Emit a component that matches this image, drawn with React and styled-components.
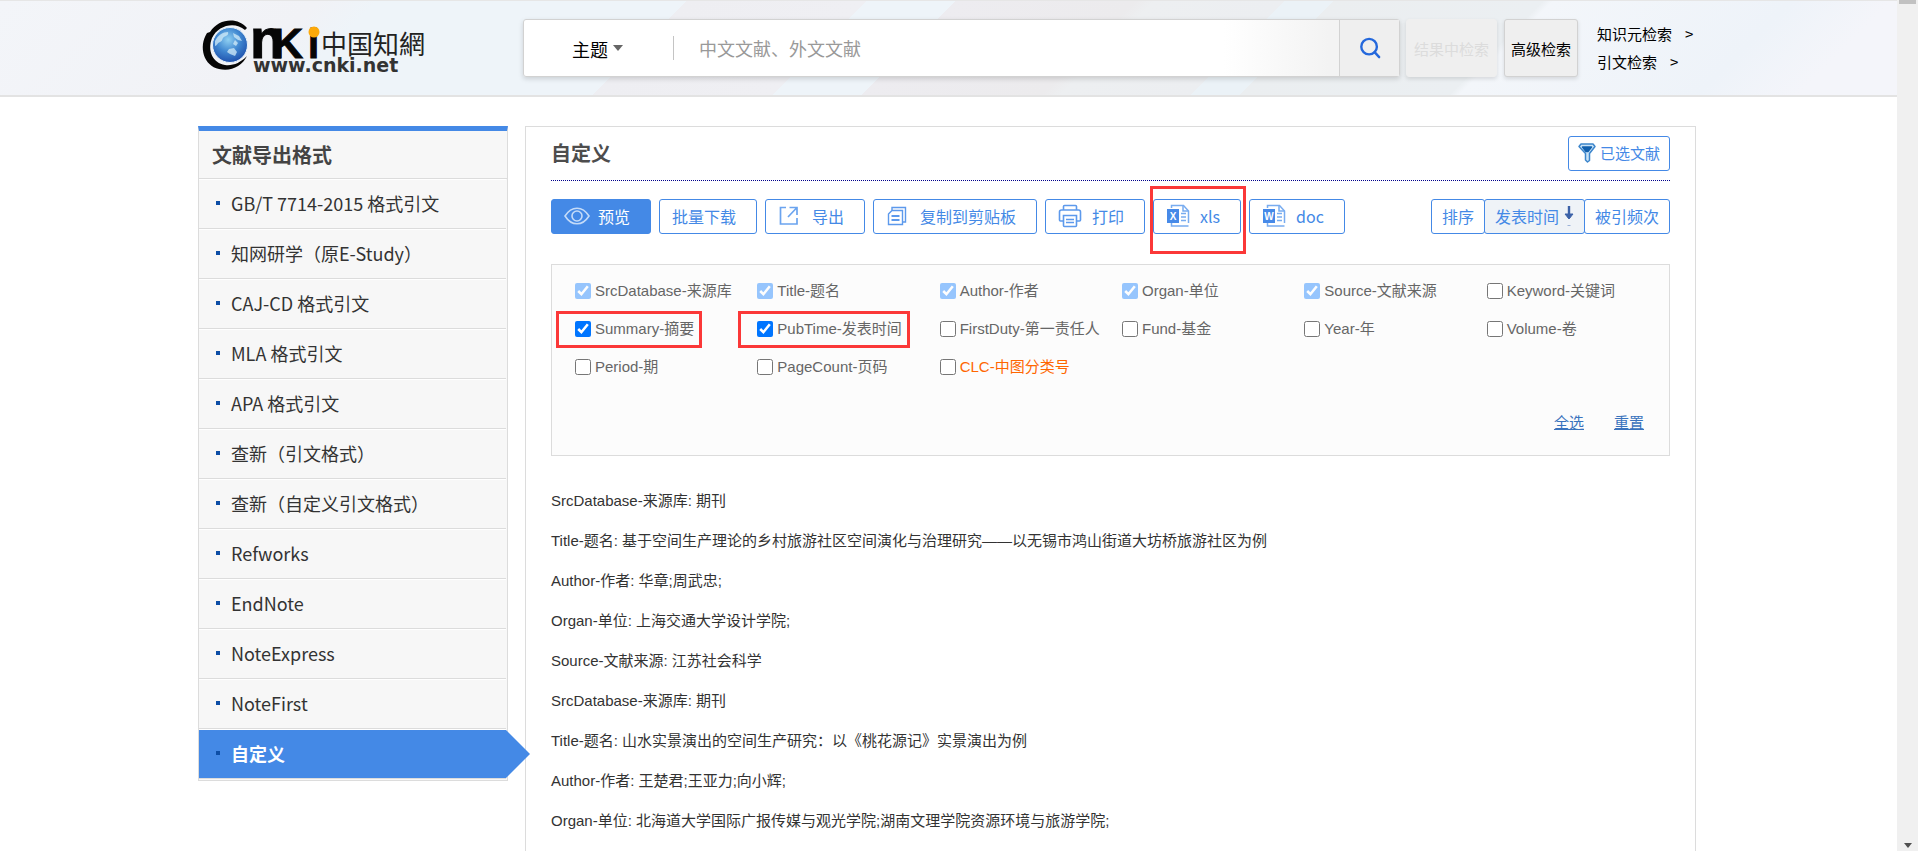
import React from "react";
import styled, { createGlobalStyle } from "styled-components";

const formats = [
  "GB/T 7714-2015 格式引文",
  "知网研学（原E-Study）",
  "CAJ-CD 格式引文",
  "MLA 格式引文",
  "APA 格式引文",
  "查新（引文格式）",
  "查新（自定义引文格式）",
  "Refworks",
  "EndNote",
  "NoteExpress",
  "NoteFirst",
  "自定义",
];

const fields = [
  { name: "SrcDatabase-来源库", checked: true, fixed: true },
  { name: "Title-题名", checked: true, fixed: true },
  { name: "Author-作者", checked: true, fixed: true },
  { name: "Organ-单位", checked: true, fixed: true },
  { name: "Source-文献来源", checked: true, fixed: true },
  { name: "Keyword-关键词" },
  { name: "Summary-摘要", checked: true, marked: true },
  { name: "PubTime-发表时间", checked: true, marked: true },
  { name: "FirstDuty-第一责任人" },
  { name: "Fund-基金" },
  { name: "Year-年" },
  { name: "Volume-卷" },
  { name: "Period-期" },
  { name: "PageCount-页码" },
  { name: "CLC-中图分类号", highlight: true },
];

const records = [
  "SrcDatabase-来源库: 期刊",
  "Title-题名: 基于空间生产理论的乡村旅游社区空间演化与治理研究——以无锡市鸿山街道大坊桥旅游社区为例",
  "Author-作者: 华章;周武忠;",
  "Organ-单位: 上海交通大学设计学院;",
  "Source-文献来源: 江苏社会科学",
  "SrcDatabase-来源库: 期刊",
  "Title-题名: 山水实景演出的空间生产研究：以《桃花源记》实景演出为例",
  "Author-作者: 王楚君;王亚力;向小辉;",
  "Organ-单位: 北海道大学国际广报传媒与观光学院;湖南文理学院资源环境与旅游学院;",
];

const Logo = () => (
  <svg width="226" height="56" viewBox="0 0 226 56" overflow="visible" role="img" aria-label="CNKI">
    <defs>
      <radialGradient id="globe" cx="0.45" cy="0.35" r="0.7">
        <stop offset="0" stopColor="#8fd0f2" />
        <stop offset="0.5" stopColor="#3f86d0" />
        <stop offset="1" stopColor="#1b4aa8" />
      </radialGradient>
    </defs>
    <circle cx="28" cy="25" r="17.5" fill="url(#globe)" stroke="#e8f3fb" />
    <path
      d="M13 21c3-6 8-9 13-9 1 3-2 4-4 5s-1 4-4 5-3 4-5 4zM31 13l6 3 3 5-4-1-4-3zM27 29l5-1 3 4-2 4-5-2-3-2zM33 20l3 3-2 3-3-2z"
      fill="#d3ecf8"
      opacity="0.75"
    />
    <path
      d="M45 8C36-3 17-2 8 12l-3 1C-4 27 2 46 17 49c12 3 23-3 28-13-7 7-14 10-22 9C11 43 5 31 10 18 16 5 33 1 43 10z"
      fill="#060606"
    />
    <text
      x="48"
      y="38"
      fontSize="56"
      fontFamily="'Liberation Sans', Arial, sans-serif"
      fontWeight="700"
      fill="#060606"
      stroke="#060606"
    >
      n
      <tspan x="70" fontSize="43">K</tspan>
      <tspan x="106" fontSize="40">i</tspan>
    </text>
    <circle cx="112" cy="12" r="5.5" fill="#fda90a" />
    <text x="119" y="34" fontSize="26" fontFamily="'Noto Sans CJK SC', sans-serif" fill="#222">
      中国知網
    </text>
    <text x="51" y="52" fontSize="19" fontFamily="'DejaVu Sans', sans-serif" fontWeight="700" fill="#333">
      www.cnki.net
    </text>
  </svg>
);

const SearchIcon = () => (
  <svg width="22" height="22" viewBox="0 0 24 24" fill="none" stroke="#2468dc" strokeWidth="2.6">
    <circle cx="11" cy="10.500" r="8.500" />
    <path d="M17 16.500l5 5.500" strokeLinecap="round" />
  </svg>
);

const FunnelIcon = () => (
  <svg width="18" height="20" viewBox="0 0 18 20" fill="none" stroke="#3d86cc" strokeWidth="1.500" strokeLinejoin="round">
    <path d="M3 1h12l2 2.500-5.500 7v7L9.500 19 7.500 17v-6.500L1 3.500z" fill="#c9e3f7" />
    <path d="M4.500 4h9L10 8.500H8z" fill="#1160ae" stroke="#1160ae" />
  </svg>
);

const EyeIcon = () => (
  <svg width="26" height="18" viewBox="0 0 26 18" fill="none" stroke="#c4dbf8" strokeWidth="1.600">
    <path d="M1 9C4.500 3.500 8.500 1.200 13 1.200S21.500 3.500 25 9c-3.500 5.500-7.500 7.800-12 7.800S4.500 14.500 1 9z" />
    <circle cx="13" cy="9" r="5" />
  </svg>
);

const ExportIcon = () => (
  <svg width="20" height="20" viewBox="0 0 20 20" fill="none" stroke="#6ba4ef" strokeWidth="1.700">
    <path d="M7 1.500H1.500v16.500h16.500v-6" />
    <path d="M10.500 1.500H18V9M18 1.500L9 11" />
  </svg>
);

const CopyIcon = () => (
  <svg width="20" height="20" viewBox="0 0 20 20" fill="none" stroke="#5c99ec" strokeWidth="1.400">
    <path d="M5 4V1.500h13.500V16H16" />
    <path d="M1.500 8L5 4.500h10.500V18.500h-14z" />
    <path d="M4.500 10h8M4.500 14h8" strokeWidth="1.800" />
  </svg>
);

const PrintIcon = () => (
  <svg width="24" height="24" viewBox="0 0 24 24" fill="none" stroke="#5c99ec" strokeWidth="1.600">
    <path d="M5.500 6V2.500q0-1 1-1h11q1 0 1 1V6" />
    <path d="M5 17H2.500q-1 0-1-1V8q0-2 2-2h17q2 0 2 2v8q0 1-1 1H19" />
    <path d="M5.500 11.500h13v10q0 1-1 1h-11q-1 0-1-1zM8 15.500h8M8 18.500h8" />
  </svg>
);

const FileIcon = ({ letter }) => (
  <svg width="24" height="24" viewBox="0 0 24 24" fill="none" stroke="#78acf0" strokeWidth="1.500">
    <path d="M5.500 4V1.500h12L22.500 7v12M5.500 19v3h17" />
    <path d="M17 1.500V7h5.500M15 9.500h5M15 13h5M15 16.500h5" />
    <rect x="1" y="5" width="12" height="14" fill="#478ae8" stroke="none" />
    <text
      x="7"
      y="16"
      fontSize="10"
      fontWeight="700"
      fontFamily="'Liberation Sans', sans-serif"
      textAnchor="middle"
      fill="#fff"
      stroke="none"
    >
      {letter}
    </text>
  </svg>
);

const SortArrow = () => (
  <svg width="10" height="22" viewBox="0 0 10 22" fill="none" stroke="#3c62a8" strokeWidth="2.400">
    <path d="M5 1v12" />
    <path d="M1 9L5 14l4-5z" fill="#3c62a8" strokeWidth="1" />
    <path d="M3.500 20.500h3" stroke="#9db3d8" strokeWidth="1" />
  </svg>
);

export default function App() {
  return (
    <Window>
      <GlobalStyle />
      <Page>
        <Header>
          <HeaderInner>
            <LogoLink href="#home">
              <Logo />
            </LogoLink>
            <SearchBox>
              <TopicPicker>
                <TopicSelect aria-label="检索项" defaultValue="主题">
                  <option>主题</option>
                </TopicSelect>
                <Caret />
              </TopicPicker>
              <SearchInput aria-label="检索词" placeholder="中文文献、外文文献" />
              <SearchButton aria-label="检索">
                <SearchIcon />
              </SearchButton>
            </SearchBox>
            <HeaderButton $muted>结果中检索</HeaderButton>
            <HeaderButton>高级检索</HeaderButton>
            <HeaderLinks>
              <HeaderLink href="#knowledge">
                知识元检索<span>&gt;</span>
              </HeaderLink>
              <HeaderLink href="#citation">
                引文检索<span>&gt;</span>
              </HeaderLink>
            </HeaderLinks>
          </HeaderInner>
        </Header>

        <Content>
          <Sidebar>
            <SidebarTitle>文献导出格式</SidebarTitle>
            <FormatList>
              {formats.map((name) => (
                <FormatItem key={name}>
                  <FormatLink href="#format" $active={name === "自定义"}>
                    {name}
                  </FormatLink>
                </FormatItem>
              ))}
            </FormatList>
          </Sidebar>

          <Panel>
            <PanelHead>
              <PanelTitle>自定义</PanelTitle>
              <SelectedButton>
                <FunnelIcon />
                已选文献
              </SelectedButton>
            </PanelHead>

            <Toolbar>
              <ToolButton $primary>
                <EyeIcon />
                预览
              </ToolButton>
              <ToolButton>批量下载</ToolButton>
              <ToolButton $wide>
                <ExportIcon />
                导出
              </ToolButton>
              <ToolButton $wide>
                <CopyIcon />
                复制到剪贴板
              </ToolButton>
              <ToolButton>
                <PrintIcon />
                打印
              </ToolButton>
              <MarkedTool>
                <ToolButton>
                  <FileIcon letter="X" />
                  xls
                </ToolButton>
              </MarkedTool>
              <ToolButton>
                <FileIcon letter="W" />
                doc
              </ToolButton>
              <SortGroup>
                <SortButton>排序</SortButton>
                <SortButton $active>
                  发表时间
                  <SortArrow />
                </SortButton>
                <SortButton>被引频次</SortButton>
              </SortGroup>
            </Toolbar>

            <FieldBox>
              <FieldGrid>
                {fields.map((field) => (
                  <FieldLabel key={field.name} $marked={field.marked} $highlight={field.highlight}>
                    <Checkbox defaultChecked={field.checked} $fixed={field.fixed} />
                    {field.name}
                  </FieldLabel>
                ))}
              </FieldGrid>
              <FieldActions>
                <ActionLink href="#all">全选</ActionLink>
                <ActionLink href="#reset">重置</ActionLink>
              </FieldActions>
            </FieldBox>

            <Records>
              {records.map((line, i) => (
                <RecordLine key={i}>{line}</RecordLine>
              ))}
            </Records>
          </Panel>
        </Content>
      </Page>
      <ScrollTrack>
        <ScrollThumb />
        <ScrollArrow />
      </ScrollTrack>
    </Window>
  );
}

const GlobalStyle = createGlobalStyle`
  * {
    box-sizing: border-box;
  }
  body {
    margin: 0;
    background: #fff;
    font-family: "Liberation Sans", Arial, "Noto Sans CJK SC", sans-serif;
    font-size: 15px;
    color: #333;
  }
  button, input, select {
    font-family: "Noto Sans CJK SC", sans-serif;
    margin: 0;
  }
  a {
    color: inherit;
    text-decoration: none;
  }
`;

const Window = styled.div`
  display: flex;
  height: 100vh;
  overflow: hidden;
`;

const Page = styled.div`
  flex: 1;
  min-width: 0;
`;

const ScrollTrack = styled.div`
  display: flex;
  flex-direction: column;
  justify-content: space-between;
  width: 21px;
  padding: 0 2px 3px;
  background: #f0f0f0;
`;

const ScrollThumb = styled.div`
  height: 4px;
  background: #c1c1c1;
`;

const ScrollArrow = styled.div`
  align-self: center;
  border: 4px solid transparent;
  border-top: 5px solid #505050;
  border-bottom: 0;
`;

const Header = styled.header`
  border-top: 1px solid #e6e6e6;
  border-bottom: 2px solid #e3e3e3;
  background: linear-gradient(
    135deg,
    #f3f5f9 0%,
    #f1f2f6 16%,
    #eef4f9 19%,
    #eef4f9 34.5%,
    #eeeef2 34.5%,
    #efeff3 43.5%,
    #eef4f9 43.5%,
    #eef4f9 48%,
    #edecf0 48%,
    #ecebed 57%,
    #edeff1 58%,
    #eceef1 64.5%,
    #ebf2f7 64.5%,
    #ebf2f7 67%,
    #ebeef0 67%,
    #ebeff2 77.5%,
    #f3f6fa 78%,
    #eef3f9 90%,
    #f4f5fa 95%
  );
`;

const HeaderInner = styled.div`
  display: flex;
  align-items: center;
  max-width: 1501px;
  margin: 0 auto;
  padding: 18px 0;
`;

const LogoLink = styled.a`
  display: flex;
  margin-right: 95px;
  padding-left: 4px;
`;

const SearchBox = styled.div`
  display: flex;
  flex: 0 1 877px;
  height: 58px;
  border: 1px solid #d2d2d2;
  border-radius: 3px;
  background: linear-gradient(90deg, #fff 80%, #f3f3f3 92%);
  box-shadow: 0 2px 5px rgba(0, 0, 0, 0.15);
`;

const TopicPicker = styled.div`
  display: flex;
  align-items: center;
  width: 150px;
  margin: 16px 0;
  padding-left: 48px;
  border-right: 1px solid #c4c4c4;
`;

const TopicSelect = styled.select`
  appearance: none;
  padding: 2px 0 0;
  border: 0;
  background: none;
  font-size: 18px;
  color: #000;
`;

const Caret = styled.span`
  margin-left: 5px;
  border: 5px solid transparent;
  border-top: 6px solid #666;
  border-bottom: 0;
`;

const SearchInput = styled.input`
  flex: 1;
  min-width: 0;
  padding: 0 25px;
  border: 0;
  background: none;
  font-size: 18px;

  &::placeholder {
    color: #999;
  }
`;

const SearchButton = styled.button`
  display: flex;
  align-items: center;
  justify-content: center;
  width: 60px;
  border: 0;
  border-left: 1px solid #d2d2d2;
  background: #efefef;
`;

const HeaderButton = styled.button`
  flex: none;
  height: 58px;
  margin-left: ${(p) => (p.$muted ? 6 : 7)}px;
  padding: 0 ${(p) => (p.$muted ? 7 : 6)}px;
  border: 1px solid ${(p) => (p.$muted ? "#efefef" : "#d2d2d2")};
  border-radius: 3px;
  background: #efefef;
  box-shadow: 0 2px 4px rgba(0, 0, 0, 0.12);
  font-size: 15px;
  color: ${(p) => (p.$muted ? "#dcdcdc" : "#000")};
`;

const HeaderLinks = styled.nav`
  display: flex;
  flex-direction: column;
  margin-left: 19px;
  font-family: "Noto Sans CJK SC", sans-serif;
  line-height: 28px;
  color: #000;
`;

const HeaderLink = styled.a`
  display: flex;
  gap: 13px;
  white-space: nowrap;
`;

const Content = styled.main`
  display: flex;
  align-items: flex-start;
  gap: 17px;
  max-width: 1501px;
  margin: 29px auto 0;
  padding-right: 3px;
`;

const Sidebar = styled.aside`
  flex: none;
  width: 310px;
  padding-bottom: 1px;
  border: 1px solid #dcdcdc;
  border-top: 5px solid #4489e6;
  background: #f7f7f7;
  font-family: "Noto Sans CJK SC", sans-serif;
`;

const SidebarTitle = styled.h2`
  margin: 0;
  padding: 0 13px;
  border-bottom: 1px solid #dcdcdc;
  font-size: 20px;
  line-height: 47px;
  color: #444;
`;

const FormatList = styled.ul`
  margin: 0;
  padding: 0 1px 0 0;
  list-style: none;
`;

const FormatItem = styled.li`
  border-top: 1px solid #fff;
  border-bottom: 1px solid #dcdcdc;
`;

const FormatLink = styled.a`
  position: relative;
  display: flex;
  align-items: center;
  gap: 11px;
  padding: 0 0 2px 17px;
  font-size: 18px;
  line-height: 46px;
  font-weight: ${(p) => (p.$active ? 700 : 400)};
  color: ${(p) => (p.$active ? "#fff" : "#333")};
  background: ${(p) => (p.$active ? "#4489e6" : "none")};

  &::before {
    content: "";
    width: 4px;
    height: 4px;
    background: #0d4ea6;
  }

  &::after {
    content: "";
    display: ${(p) => (p.$active ? "block" : "none")};
    position: absolute;
    left: 100%;
    top: 0;
    border: 24px solid transparent;
    border-left-color: #4489e6;
    border-right: 0;
  }
`;

const Panel = styled.section`
  flex: 1;
  min-width: 0;
  padding: 9px 25px 60px;
  border: 1px solid #dcdcdc;
`;

const PanelHead = styled.div`
  display: flex;
  justify-content: space-between;
  align-items: flex-start;
  padding-bottom: 9px;
  border-bottom: 1px dotted #00008b;
`;

const PanelTitle = styled.h1`
  margin: 0;
  font-family: "Noto Sans CJK SC", sans-serif;
  font-size: 20px;
  line-height: 34px;
  color: #4d4d4d;
`;

const BlueButton = styled.button`
  display: flex;
  align-items: center;
  justify-content: center;
  height: 35px;
  border: 1px solid #4489e6;
  border-radius: 3px;
  background: #fff;
  color: #4489e6;
  white-space: nowrap;
`;

const SelectedButton = styled(BlueButton)`
  gap: 4px;
  padding: 0 9px 2px;
  font-size: 15px;
`;

const Toolbar = styled.div`
  display: flex;
  gap: 8px;
  margin-top: 18px;
`;

const ToolButton = styled(BlueButton)`
  gap: ${(p) => (p.$primary ? 8 : p.$wide ? 13 : 10)}px;
  padding: 0 20px 2px ${(p) => (p.$wide ? 13 : 12)}px;
  font-size: 16px;
  ${(p) => p.$primary && "background: #4489e6; color: #fff;"}
`;

const RedFrame = `
  position: relative;

  &::after {
    content: "";
    position: absolute;
    border: 3px solid #fb3838;
    pointer-events: none;
  }
`;

const MarkedTool = styled.div`
  ${RedFrame}

  &::after {
    inset: -13px -5px -20px -3px;
  }
`;

const SortGroup = styled.div`
  display: flex;
  margin-left: auto;
`;

const SortButton = styled(BlueButton)`
  gap: 5px;
  padding: 0 10px 2px;
  font-size: 16px;
  background: ${(p) => (p.$active ? "#eff3f7" : "#fff")};

  & + & {
    margin-left: -1px;
  }
`;

const FieldBox = styled.form`
  margin-top: 30px;
  padding: 7px 0 19px 23px;
  border: 1px solid #dcdcdc;
  background: #fcfcfc;
`;

const FieldGrid = styled.div`
  display: grid;
  grid-template-columns: repeat(6, 1fr);
  justify-items: start;
`;

const FieldLabel = styled.label`
  display: flex;
  align-items: center;
  gap: 4px;
  line-height: 38px;
  white-space: nowrap;
  color: ${(p) => (p.$highlight ? "#ff6600" : "#666")};
  ${(p) => p.$marked && RedFrame}

  &::after {
    inset: 1px -8px 0 -19px;
  }
`;

const Checkbox = styled.input.attrs({ type: "checkbox" })`
  width: 16px;
  height: 16px;
  accent-color: #0075ff;
  opacity: ${(p) => (p.$fixed ? 0.4 : 1)};
`;

const FieldActions = styled.div`
  display: flex;
  justify-content: flex-end;
  gap: 30px;
  margin-top: 24px;
  padding-right: 25px;
`;

const ActionLink = styled.a`
  line-height: 26px;
  text-decoration: underline;
  color: #3a73bd;
`;

const Records = styled.div`
  padding-top: 25px;
`;

const RecordLine = styled.p`
  margin: 0;
  line-height: 40px;
`;
